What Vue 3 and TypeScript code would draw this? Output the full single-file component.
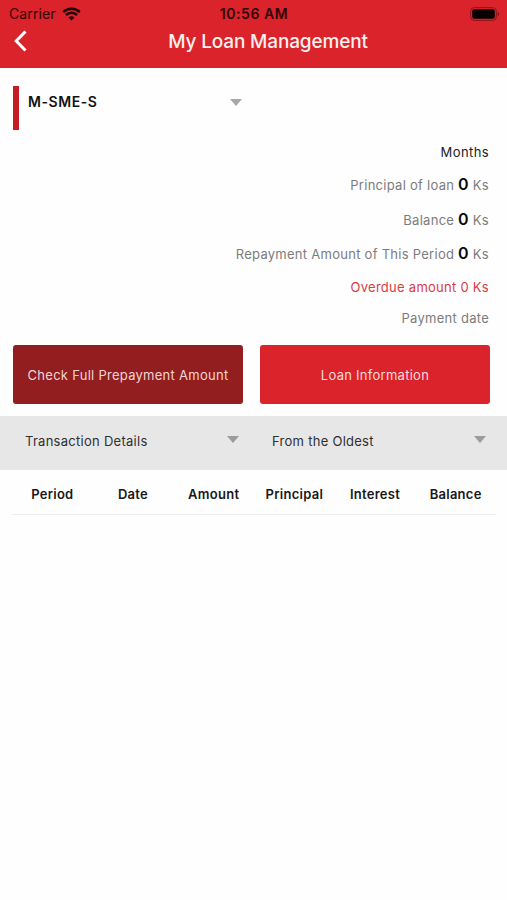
<script setup lang="ts">
import { ref } from 'vue'

interface Amount {
  label: string
  value: number
}

const loan = ref<string>('M-SME-S')
const amounts: Amount[] = [
  { label: 'Principal of loan', value: 0 },
  { label: 'Balance', value: 0 },
  { label: 'Repayment Amount of This Period', value: 0 },
]
const filters: string[] = ['Transaction Details', 'From the Oldest']
const columns: string[] = ['Period', 'Date', 'Amount', 'Principal', 'Interest', 'Balance']
</script>

<template>
  <div class="screen">
    <header class="top">
      <div class="status">
        <div class="carrier">
          <span>Carrier</span>
          <svg class="wifi" width="19" height="14" viewBox="0 0 19 14">
            <path d="M1.2 5.1a12 12 0 0 1 16.6 0" />
            <path d="M4 8a8 8 0 0 1 11 0" />
            <path class="dot" d="M9.5 13.6 6.5 10.6a4.4 4.4 0 0 1 6 0z" />
          </svg>
        </div>
        <span class="time">10:56 AM</span>
        <svg class="battery" width="30" height="14" viewBox="0 0 30 14">
          <rect class="shell" x="0.6" y="0.6" width="25.8" height="12.8" rx="3.6" />
          <rect x="2.2" y="2.2" width="22.6" height="9.6" rx="2" />
          <path class="cap" d="M27.6 5v4c1-.4 1.5-1.100 1.500-2s-.5-1.600-1.500-2z" />
        </svg>
      </div>
      <div class="nav">
        <svg class="back" width="13" height="22" viewBox="0 0 13 22">
          <path d="M11.500 1.500 2.200 11l9.300 9.500" />
        </svg>
        <h1>My Loan Management</h1>
      </div>
    </header>

    <section class="loan">
      <span class="accent"></span>
      <span class="name">{{ loan }}</span>
      <svg class="caret" width="12" height="7" viewBox="0 0 12 7"><path d="M0 0h12L6 7z" /></svg>
    </section>

    <section class="summary">
      <div class="row months">Months</div>
      <div v-for="a in amounts" :key="a.label" class="row amount">
        {{ a.label }}&nbsp;<b>{{ a.value }}</b>&nbsp;Ks
      </div>
      <div class="row overdue">Overdue amount 0 Ks</div>
      <div class="row">Payment date</div>
    </section>

    <section class="actions">
      <button type="button" class="dark">Check Full Prepayment Amount</button>
      <button type="button">Loan Information</button>
    </section>

    <section class="filters">
      <div v-for="f in filters" :key="f" class="filter">
        <span>{{ f }}</span>
        <svg class="caret" width="12" height="7" viewBox="0 0 12 7"><path d="M0 0h12L6 7z" /></svg>
      </div>
    </section>

    <div class="columns">
      <span v-for="c in columns" :key="c">{{ c }}</span>
    </div>
  </div>
</template>

<style>
body {
  background: #fff;
}
</style>

<style scoped>
.screen {
  width: 507px;
  height: 900px;
  overflow: hidden;
  background: #fefefe;
  font-family: Inter, "Liberation Sans", sans-serif;
  font-size: 13px;
  letter-spacing: 0.27px;
  color: #222;
}
.top {
  height: 68px;
  background: #da232a;
}
.status {
  display: grid;
  grid-template-columns: 1fr auto 1fr;
  align-items: center;
  height: 27px;
  padding: 0 7px 0 8px;
  color: #300507;
}
.carrier {
  display: flex;
  align-items: center;
  gap: 6px;
  padding-left: 1px;
  font-size: 14px;
  letter-spacing: 0.1px;
}
.wifi {
  fill: none;
  stroke: #240204;
  stroke-width: 2.5;
}
.wifi .dot {
  fill: #240204;
  stroke: none;
}
.time {
  font-size: 14px;
  font-weight: 600;
  letter-spacing: 0.55px;
}
.battery {
  justify-self: end;
  fill: #0a0001;
}
.battery .shell {
  fill: none;
  stroke: #8c161b;
}
.battery .cap {
  fill: #8c161b;
}
.nav {
  display: grid;
  grid-template-columns: 60px 1fr 31px;
  align-items: center;
  height: 28px;
}
.back {
  margin-left: 14px;
  fill: none;
  stroke: #fff;
  stroke-width: 3;
}
h1 {
  margin: 0;
  text-align: center;
  font-size: 19px;
  font-weight: 500;
  letter-spacing: -0.15px;
  color: #fff0ef;
}
.loan {
  display: flex;
  align-items: flex-start;
  height: 50px;
  padding: 18px 0 0 13px;
}
.accent {
  width: 6px;
  height: 44px;
  background: #c61c24;
}
.name {
  width: 202px;
  padding-left: 9px;
  box-sizing: border-box;
  line-height: 32px;
  font-size: 14px;
  font-weight: 600;
  letter-spacing: 0.55px;
  color: #111;
}
.caret {
  flex: none;
  fill: #9c9c9c;
}
.loan .caret {
  margin: 13px 0 0 9px;
  fill: #a8a8a8;
}
.summary {
  display: grid;
  grid-template-rows: 32px 35px 34px 35px 30px 32px;
  padding: 0 18px 11px 0;
}
.row {
  display: flex;
  justify-content: flex-end;
  align-items: center;
  color: #7c7c7c;
}
.row b {
  font-size: 16px;
  font-weight: 600;
  color: #080808;
}
.row.amount {
  align-items: baseline;
  line-height: 33px;
}
.row.months {
  letter-spacing: 0.4px;
  color: #222;
}
.row.overdue {
  color: #dc3b41;
}
.actions {
  display: grid;
  grid-template-columns: 1fr 1fr;
  gap: 17px;
  height: 59px;
  padding: 0 17px 12px 13px;
}
button {
  padding: 0;
  border: 0;
  border-radius: 3px;
  background: #da232a;
  color: #ffdcdc;
  font: inherit;
  letter-spacing: inherit;
}
button.dark {
  background: #921e20;
  color: #f1d5d4;
}
.filters {
  display: grid;
  grid-template-columns: 247px 1fr;
  height: 54px;
  background: #e7e7e7;
}
.filter {
  display: flex;
  align-items: flex-start;
}
.filter span {
  width: 202px;
  padding: 0 0 0 25px;
  line-height: 51px;
  color: #303030;
}
.filter .caret {
  margin-top: 20px;
}
.columns {
  display: grid;
  grid-template-columns: repeat(6, 1fr);
  height: 44px;
  margin: 0 11px 0 12px;
  border-bottom: 1px solid #ededed;
  line-height: 48px;
  text-align: center;
  font-weight: 600;
  color: #181818;
}
</style>
